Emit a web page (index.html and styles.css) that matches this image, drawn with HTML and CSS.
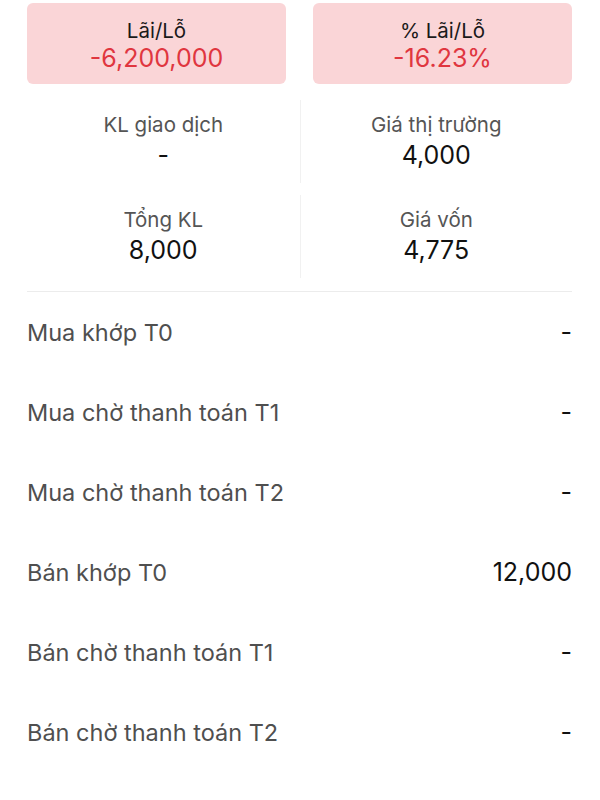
FILE: index.html
```html
<!DOCTYPE html>
<html lang="vi">
<head>
<meta charset="utf-8">
<link rel="stylesheet" href="styles.css">
</head>
<body>
<div class="page">
  <div class="cards">
    <div class="card">
      <div class="card-title">Lãi/Lỗ</div>
      <div class="card-value">-6,200,000</div>
    </div>
    <div class="card">
      <div class="card-title">% Lãi/Lỗ</div>
      <div class="card-value">-16.23%</div>
    </div>
  </div>
  <div class="stats">
    <div class="stat">
      <div class="stat-label">KL giao dịch</div>
      <div class="stat-value">-</div>
    </div>
    <div class="stat stat-right">
      <div class="stat-label">Giá thị trường</div>
      <div class="stat-value">4,000</div>
    </div>
    <div class="stat">
      <div class="stat-label">Tổng KL</div>
      <div class="stat-value">8,000</div>
    </div>
    <div class="stat stat-right">
      <div class="stat-label">Giá vốn</div>
      <div class="stat-value">4,775</div>
    </div>
  </div>
  <div class="divider"></div>
  <div class="list">
    <div class="row"><span class="row-label">Mua khớp T0</span><span class="row-value">-</span></div>
    <div class="row"><span class="row-label">Mua chờ thanh toán T1</span><span class="row-value">-</span></div>
    <div class="row"><span class="row-label">Mua chờ thanh toán T2</span><span class="row-value">-</span></div>
    <div class="row"><span class="row-label">Bán khớp T0</span><span class="row-value">12,000</span></div>
    <div class="row"><span class="row-label">Bán chờ thanh toán T1</span><span class="row-value">-</span></div>
    <div class="row"><span class="row-label">Bán chờ thanh toán T2</span><span class="row-value">-</span></div>
    <div class="row"><span class="row-label">Khả năng bán</span><span class="row-value">-</span></div>
  </div>
</div>
</body>
</html>
```
FILE: styles.css
```css
html, body {
  margin: 0;
  padding: 0;
  background: #ffffff;
}
body {
  font-family: Inter, Roboto, "Liberation Sans", sans-serif;
  color: #111111;
  overflow: hidden;
  height: 800px;
}
.page {
  padding: 3px 28px 0 27px;
}
.cards {
  display: flex;
  gap: 27px;
}
.card {
  flex: 1;
  height: 81px;
  box-sizing: border-box;
  background: #fad5d7;
  border-radius: 6px;
  display: flex;
  flex-direction: column;
  align-items: center;
  padding-top: 15px;
}
.card-title {
  font-size: 20.5px;
  line-height: 26px;
  color: #1a1a1a;
}
.card-value {
  font-size: 25px;
  line-height: 28px;
  color: #e0363f;
}
.stats {
  display: grid;
  grid-template-columns: 1fr 1fr;
  row-gap: 12px;
  margin-top: 16px;
}
.stat {
  height: 83px;
  box-sizing: border-box;
  padding-top: 11px;
  display: flex;
  flex-direction: column;
  align-items: center;
  gap: 2px;
}
.stat-right {
  border-left: 1px solid #f1f1f1;
}
.stat-label {
  font-size: 20.5px;
  line-height: 28px;
  color: #555555;
}
.stat-value {
  font-size: 25px;
  line-height: 28px;
  color: #111111;
}
.divider {
  height: 1px;
  background: #ececec;
  margin-top: 13px;
}
.row {
  height: 80px;
  display: flex;
  align-items: center;
  justify-content: space-between;
}
.row-label {
  font-size: 23.5px;
  color: #4f4f4f;
}
.row-value {
  font-size: 25px;
  color: #111111;
}
```
